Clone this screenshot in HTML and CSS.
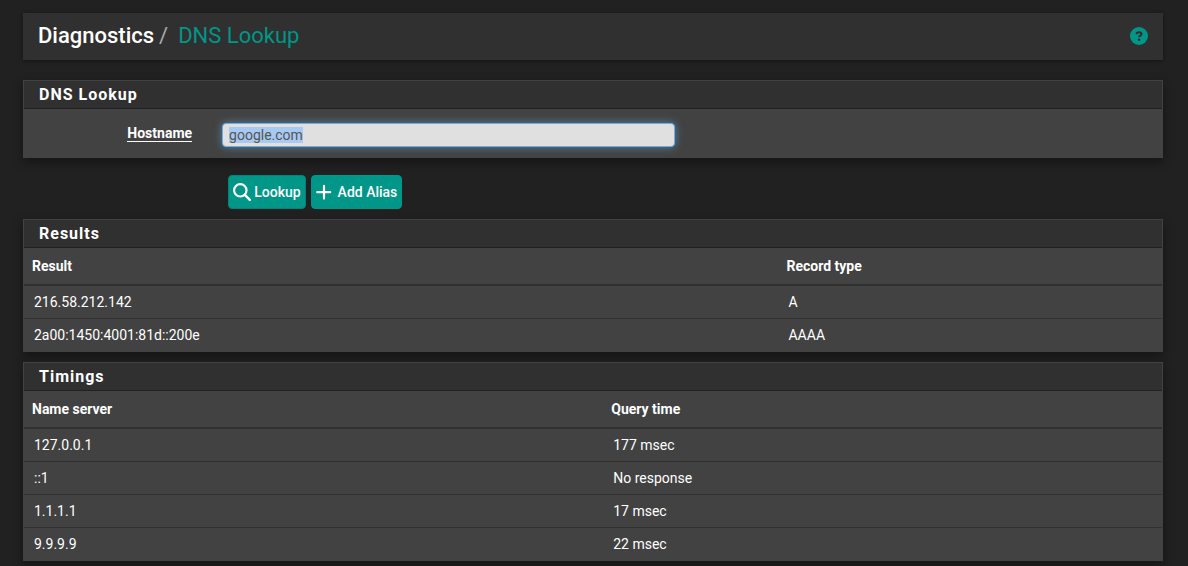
FILE: index.html
```html
<!DOCTYPE html>
<html lang="en">
<head>
<meta charset="utf-8">
<meta name="viewport" content="width=device-width, initial-scale=1">
<title>Diagnostics: DNS Lookup</title>
<link rel="stylesheet" href="styles.css">
</head>
<body>
<main class="container">
  <header class="page-header">
    <h1 class="breadcrumb">Diagnostics<span class="separator">/</span><a class="current" href="#">DNS Lookup</a></h1>
    <a class="help" href="#" aria-label="Help">
      <svg viewBox="0 0 18 18" width="18" height="18" aria-hidden="true"><circle cx="9" cy="9" r="9" fill="#009688"/><path d="M6.5 7.1C6.7 5.8 7.6 5.2 9 5.2c1.5 0 2.5.7 2.5 1.9 0 1.6-2.4 1.5-2.4 3.2" fill="none" stroke="#303030" stroke-width="2.1"/><circle cx="9.1" cy="12.8" r="1.3" fill="#303030"/></svg>
    </a>
  </header>

  <form class="lookup-form">
    <section class="panel">
      <h2 class="panel-heading">DNS Lookup</h2>
      <div class="form-row">
        <label class="form-label" for="host">Hostname</label>
        <input class="form-control" id="host" type="text" value="google.com" spellcheck="false">
      </div>
    </section>
    <div class="actions">
      <button class="btn btn-lookup" type="button"><svg viewBox="0 0 18 18" width="18" height="18" aria-hidden="true"><circle cx="7.3" cy="7.3" r="6.2" fill="none" stroke="#fff" stroke-width="2.2"/><path d="M11.7 11.7l5.1 5.1" stroke="#fff" stroke-width="2.4" stroke-linecap="round"/></svg>Lookup</button>
      <button class="btn btn-alias" type="button"><svg viewBox="0 0 16 16" width="16" height="16" aria-hidden="true"><path d="M8 1.8v12.8M1.2 8.2h13" stroke="#fff" stroke-width="2.2" stroke-linecap="round"/></svg>Add Alias</button>
    </div>
  </form>

  <section class="panel">
    <h2 class="panel-heading">Results</h2>
    <table class="table results">
      <thead><tr><th scope="col">Result</th><th scope="col">Record type</th></tr></thead>
      <tbody>
        <tr><td>216.58.212.142</td><td>A</td></tr>
        <tr><td>2a00:1450:4001:81d::200e</td><td>AAAA</td></tr>
      </tbody>
    </table>
  </section>

  <section class="panel">
    <h2 class="panel-heading">Timings</h2>
    <table class="table timings">
      <thead><tr><th scope="col">Name server</th><th scope="col">Query time</th></tr></thead>
      <tbody>
        <tr><td>127.0.0.1</td><td>177 msec</td></tr>
        <tr><td>::1</td><td>No response</td></tr>
        <tr><td>1.1.1.1</td><td>17 msec</td></tr>
        <tr><td>9.9.9.9</td><td>22 msec</td></tr>
      </tbody>
    </table>
  </section>
</main>
<script src="script.js"></script>
</body>
</html>
```
FILE: styles.css
```css
* { box-sizing: border-box; }

body {
  margin: 0;
  background: #212121;
  color: #fff;
  font: 400 14px/20px Roboto, "Liberation Sans", sans-serif;
}

.container { padding: 13px 25px 5px 23px; }

.page-header {
  display: flex;
  align-items: center;
  justify-content: space-between;
  margin-bottom: 20px;
  padding: 9px 15px 10px;
  background: #303030;
  box-shadow: 0 1px 4px rgba(0, 0, 0, .4);
}

.breadcrumb { margin: 0; font-size: 22px; line-height: 28px; font-weight: 500; }
.separator { padding: 0 10px 0 5px; color: #aaa; font-weight: 400; }
.current { color: #009688; font-weight: 400; text-decoration: none; }
.help { display: flex; }

.panel {
  margin-bottom: 10px;
  border: 1px solid #424242;
  background: #424242;
  box-shadow: 0 4px 10px rgba(0, 0, 0, .4);
}

.panel-heading {
  margin: 0;
  padding: 4px 15px 3px;
  border-bottom: 1px solid #212121;
  background: #303030;
  font-size: 16px;
  line-height: 20px;
  font-weight: 700;
  letter-spacing: 1px;
}

.form-row {
  display: grid;
  grid-template-columns: calc(16% - 14px) calc(40% - 2px);
  column-gap: 30px;
  align-items: start;
  padding: 14px 0 10px;
}

.form-label {
  justify-self: end;
  margin-top: 2px;
  border-bottom: 1px solid #fff;
  font-weight: 700;
  line-height: 16px;
}

.form-control {
  width: 100%;
  height: 24px;
  padding: 0 6px;
  border: 1px solid #66afe9;
  border-radius: 4px;
  outline: 0;
  background: #e0e0e0;
  color: #555;
  font: inherit;
  box-shadow: 0 0 8px rgba(102, 175, 233, .6);
}

.form-control::selection { background: #a8caf2; color: #555; }

.actions {
  display: flex;
  gap: 5px;
  margin: 17px 0 10px;
  padding-left: 18%;
}

.btn {
  display: flex;
  align-items: center;
  height: 34px;
  padding: 0 4px;
  border: 1px solid #008578;
  border-radius: 4px;
  background: #009688;
  color: #fff;
  font: inherit;
  font-weight: 500;
}

.btn-lookup { gap: 3px; }
.btn-alias { gap: 6px; border-color: #009688; }

.table { width: 100%; border-collapse: separate; border-spacing: 0; table-layout: fixed; text-align: left; }
.table th { padding: 8px; border-bottom: 2px solid #303030; font-weight: 700; }
.table td { padding: 6px 10px; }
.table tr + tr td { border-top: 1px solid #303030; }
.results th:first-child { width: 66.3%; }
.timings th:first-child { width: 50.9%; }
```
FILE: script.js
```js
const host = document.getElementById("host");
host.focus();
host.select();
```
